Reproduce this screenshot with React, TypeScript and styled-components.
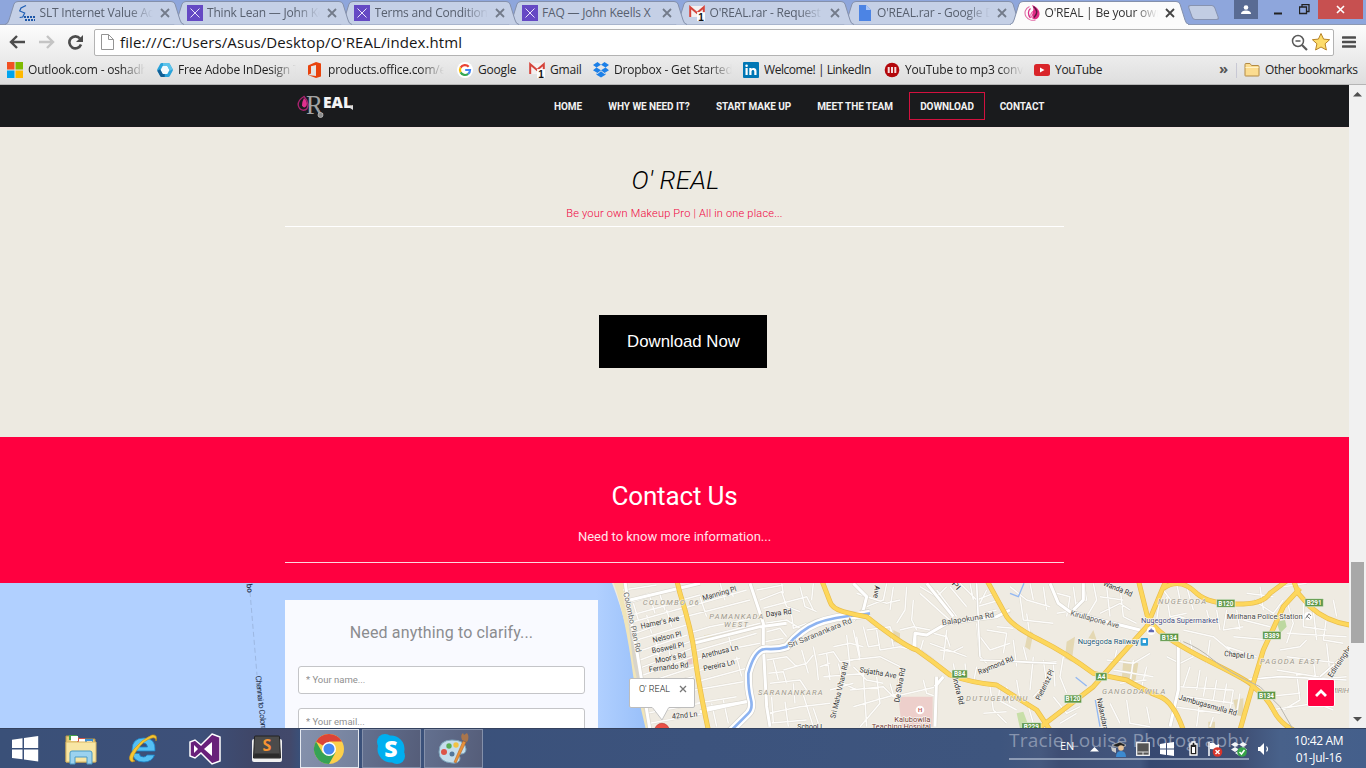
import React from "react";
import styled, { createGlobalStyle } from "styled-components";

const ui = `"Open Sans", "Noto Sans", sans-serif`;
const web = `Roboto, "Liberation Sans", sans-serif`;

const Global = createGlobalStyle`
  * { box-sizing: border-box; }
  body { margin: 0; overflow: hidden; }
`;

const Screen = styled.div`
  width: 1366px;
  height: 768px;
  display: flex;
  flex-direction: column;
  overflow: hidden;
  font-family: ${ui};
`;

/* ---------- browser chrome ---------- */
const TabStrip = styled.div`
  height: 25px;
  flex: none;
  display: flex;
  padding-left: 5px;
  background: #8ea6dc;
  border-bottom: 1px solid #8b98b3;
`;
const TabItem = styled.div<{ $active?: boolean; $z: number }>`
  position: relative;
  z-index: ${(p) => p.$z};
  flex: none;
  width: ${(p) => (p.$active ? 177 : 167.5)}px;
  height: 25px;
  display: flex;
  align-items: center;
  padding-left: 14px;
  color: ${(p) => (p.$active ? "#333" : "#58606f")};
`;
const TabShape = styled.svg`
  position: absolute;
  left: 0;
  top: 0;
  z-index: -1;
`;
const Fade = styled.span<{ $w: number; $fade?: boolean; $ls?: number }>`
  display: block;
  width: ${(p) => p.$w}px;
  overflow: hidden;
  white-space: nowrap;
  font-size: 12px;
  line-height: 18px;
  letter-spacing: ${(p) => p.$ls ?? -0.2}px;
  ${(p) => p.$fade && "mask-image: linear-gradient(to right, #000 calc(100% - 24px), transparent);"}
`;
const TabTitle = styled(Fade)`
  margin: 1px 0 0 4.5px;
`;
const TabClose = styled.svg`
  margin: 1px 0 0 7px;
  flex: none;
`;
const NewTab = styled.div`
  width: 27px;
  height: 15px;
  margin: 5px 0 0 3px;
  background: #c2cde3;
  border: 1px solid #8793b0;
  border-radius: 3px;
  transform: skewX(20deg);
`;
const WindowButtons = styled.div`
  display: flex;
  margin: 0 3px 0 auto;
  height: 19px;
`;
const WinButton = styled.div<{ $w: number; $bg?: string }>`
  width: ${(p) => p.$w}px;
  height: 19px;
  background: ${(p) => p.$bg ?? "transparent"};
  display: flex;
  align-items: center;
  justify-content: center;
`;
const WinSpacer = styled.div`
  width: 4px;
`;
const Toolbar = styled.div`
  height: 32px;
  flex: none;
  display: flex;
  align-items: center;
  padding: 2px 9px 0 9px;
  background: linear-gradient(#fcfcfc, #ececec);
`;
const NavIcons = styled.div`
  display: flex;
  width: 85px;
`;
const Omnibox = styled.div`
  width: 1240px;
  height: 27px;
  border: 1px solid #b3b3b3;
  border-radius: 2px;
  background: #fff;
  display: flex;
  align-items: center;
  padding: 0 2px 0 6px;
`;
const Url = styled.span`
  flex: 1;
  margin: -1px 0 0 6px;
  font-size: 15px;
  line-height: 22px;
  letter-spacing: 0.1px;
  color: #161616;
`;
const StarIcon = styled.svg`
  margin-left: 2px;
`;
const MenuIcon = styled.svg`
  margin-left: 8px;
`;
const Bookmarks = styled.div`
  height: 28px;
  flex: none;
  display: flex;
  align-items: center;
  padding: 0 0 1px 7px;
  background: linear-gradient(#ececec, #dedede);
  border-bottom: 1px solid #b5b5b5;
  color: #222;
`;
const Bookmark = styled.div<{ $w: number }>`
  display: flex;
  align-items: center;
  gap: 5px;
  flex: none;
  width: ${(p) => p.$w}px;
`;
const BookmarkText = styled(Fade)`
  margin-top: -1px;
`;
const More = styled.span`
  width: 17px;
  margin: -4px 0 0 1px;
  font-size: 15px;
  font-weight: 700;
  line-height: 16px;
  color: #555;
`;
const Divider = styled.i`
  width: 1px;
  height: 15px;
  background: #c8c8d4;
  margin-right: 7px;
`;

/* ---------- web page ---------- */
const Viewport = styled.div`
  height: 643px;
  flex: none;
  display: flex;
`;
const Page = styled.main`
  width: 1349px;
  display: flex;
  flex-direction: column;
  font-family: ${web};
  position: relative;
`;
const SiteNav = styled.nav`
  height: 42px;
  flex: none;
  background: #1a1b1d;
  display: flex;
  align-items: center;
  padding-left: 297px;
`;
const LogoBox = styled.div`
  width: 247px;
  height: 28px;
`;
const NavLink = styled.a<{ $w: number; $active?: boolean }>`
  width: ${(p) => p.$w}px;
  height: 28px;
  flex: none;
  border: 1px solid ${(p) => (p.$active ? "#d3113f" : "transparent")};
  display: flex;
  align-items: center;
  justify-content: center;
  margin-right: 6px;
  font-size: 10px;
  font-weight: 700;
  letter-spacing: -0.08px;
  color: #f2f2f2;
  white-space: nowrap;
`;
const Hero = styled.section`
  height: 310px;
  flex: none;
  background: #edeae1;
  border-top: 1px solid #f3e6e2;
  display: flex;
  flex-direction: column;
  align-items: center;
`;
const SectionHead = styled.header<{ $top: number; $h: number; $line: string }>`
  width: 779px;
  height: ${(p) => p.$h}px;
  flex: none;
  padding-top: ${(p) => p.$top}px;
  border-bottom: 1px solid ${(p) => p.$line};
  display: flex;
  flex-direction: column;
  align-items: center;
`;
const HeroTitle = styled.h1`
  margin: 0 0 0 2px;
  font-size: 26px;
  font-weight: 300;
  font-style: italic;
  line-height: 32px;
  letter-spacing: 0.1px;
  color: #000;
`;
const HeroSub = styled.p`
  margin: 10px 0 0;
  font-size: 11px;
  font-weight: 300;
  line-height: 16px;
  letter-spacing: 0.2px;
  color: #f0003c;
`;
const DownloadButton = styled.button`
  margin: 88px 0 0 17px;
  width: 168px;
  height: 53px;
  padding: 0 0 0 1px;
  border: 0;
  background: #000;
  color: #fff;
  font: 16.8px "Liberation Sans", Arial, sans-serif;
`;
const Contact = styled.section`
  height: 146px;
  flex: none;
  background: #ff0040;
  display: flex;
  flex-direction: column;
  align-items: center;
`;
const ContactTitle = styled.h2`
  margin: 0;
  font-size: 26px;
  font-weight: 400;
  line-height: 32px;
  letter-spacing: -0.15px;
  color: #fff;
`;
const ContactSub = styled.p`
  margin: 16px 0 0;
  font-size: 13px;
  line-height: 18px;
  color: #ffe3ea;
`;
const MapArea = styled.section`
  height: 145px;
  flex: none;
  position: relative;
  overflow: hidden;
  padding: 17px 0 0 285px;
`;
const MapSvg = styled.svg`
  position: absolute;
  left: 0;
  top: 0;
`;
const FormCard = styled.form`
  position: relative;
  width: 313px;
  height: 300px;
  background: #f9faff;
  padding: 22px 13px 0;
  display: flex;
  flex-direction: column;
`;
const FormTitle = styled.h3`
  margin: 0 0 22px;
  font-size: 16px;
  font-weight: 400;
  line-height: 22px;
  letter-spacing: 0.14px;
  text-align: center;
  color: #8b8c8f;
`;
const Field = styled.input`
  height: 28px;
  flex: none;
  margin-bottom: 14px;
  border: 1px solid #c4c5c8;
  border-radius: 3px;
  background: #fff;
  padding: 0 7px 2px;
  font: 9.5px ${web};
  &::placeholder { color: #8f8f8f; opacity: 1; }
`;
const InfoWindow = styled.div`
  position: absolute;
  left: 629px;
  top: 95px;
  width: 66px;
  height: 30px;
  border: 1px solid #bdbdbd;
  border-radius: 2px;
  background: #fff;
  display: flex;
  justify-content: space-between;
  padding: 3px 7px 0 9px;
  font-size: 9px;
  line-height: 15px;
  font-weight: 300;
  color: #222;
`;
const InfoPointer = styled.svg`
  position: absolute;
  left: 21px;
  top: 27px;
`;
const ToTop = styled.button`
  position: absolute;
  right: 14px;
  bottom: 21px;
  width: 28px;
  height: 28px;
  padding: 0;
  border: 1px solid #fff;
  border-radius: 2px;
  background: #ff0040;
  display: flex;
  align-items: center;
  justify-content: center;
`;
const Scrollbar = styled.div`
  width: 17px;
  background: #f1f1f1;
  display: flex;
  flex-direction: column;
  align-items: center;
`;
const ScrollArrow = styled.svg`
  margin-top: 4px;
  flex: none;
`;
const Thumb = styled.div`
  width: 13px;
  height: 81px;
  margin: 462px 0 67px;
  background: #a8a8a8;
`;

/* ---------- taskbar ---------- */
const Taskbar = styled.footer`
  height: 40px;
  flex: none;
  display: flex;
  position: relative;
  border-top: 1px solid #34425f;
  background: linear-gradient(90deg, #3a5078 0, #3d5079 200px, #3f4769 250px, #42496b 290px, #3a5079 300px, #3c537d 700px, #3e557e 1000px, #46597f 1040px, #3e4e74 1060px, #43577f 1140px, #364870 1150px, #3f4f74 1240px, #48618a 1280px, #445f8b 1366px);
`;
const TaskCell = styled.div<{ $w: number }>`
  width: ${(p) => p.$w}px;
  height: 39px;
  display: flex;
  align-items: center;
  justify-content: center;
`;
const TaskFrame = styled.div<{ $kind?: "active" | "open" }>`
  width: 59px;
  height: 39px;
  display: flex;
  align-items: center;
  justify-content: center;
  border: 1px solid ${(p) => (p.$kind === "active" ? "#e4e8ef" : p.$kind === "open" ? "#8490aa" : "transparent")};
  background: ${(p) => (p.$kind === "active" ? "linear-gradient(100deg, #8591ac, #74819d)" : p.$kind === "open" ? "linear-gradient(100deg, #63708f, #555d79)" : "transparent")};
`;
const Watermark = styled.span`
  position: absolute;
  left: 1009px;
  top: -1px;
  width: 240px;
  height: 32px;
  border-bottom: 2px solid #8d9bb5;
  font-size: 19px;
  line-height: 24px;
  letter-spacing: 0.2px;
  color: #8794ae;
  white-space: nowrap;
`;
const Tray = styled.div`
  position: relative;
  margin-left: auto;
  width: 308px;
  display: flex;
  align-items: center;
  color: #fff;
  font-size: 12px;
`;
const Lang = styled.span`
  width: 31px;
  margin-top: -6px;
  font-size: 11px;
  padding-left: 2px;
`;
const TrayIcon = styled.svg<{ $ml: number }>`
  flex: none;
  margin-left: ${(p) => p.$ml}px;
`;
const Clock = styled.div`
  margin-left: auto;
  width: 97px;
  text-align: center;
  line-height: 17px;
  letter-spacing: -0.35px;
`;

/* ---------- small icons ---------- */
const XFav = () => (
  <svg width="16" height="16"><rect width="16" height="16" fill="#6549c4" /><path d="M3.5 3.5l9 9M12.500 3.500l-9 9" stroke="#e9e4fa" strokeWidth="1" /></svg>
);
const GmailFav = () => (
  <svg width="16" height="16">
    <rect x="0.500" y="1" width="15" height="11" fill="#f4f1f1" />
    <path d="M1.200 12V2.200L8 8l6.800-5.800V8" fill="none" stroke="#d5443b" strokeWidth="2" />
    <rect x="8" y="7" width="8" height="9" fill="#fff" opacity=".85" />
    <text x="9.200" y="15.500" fontSize="10" fontFamily="Liberation Sans" fontWeight="700" fill="#111">1</text>
  </svg>
);
const SltFav = () => (
  <svg width="16" height="16"><path d="M7 .5L2 3l-1.300 3 5 2-2 4-3 .5" fill="none" stroke="#1f5fb5" strokeWidth="1.200" /><path d="M5 12h11M6 15h10" stroke="#1d57a8" strokeWidth="2" strokeDasharray="2 1" /></svg>
);
const DocFav = () => (
  <svg width="16" height="16"><path d="M2 0h7l5 5v11H2z" fill="#4c84e4" /><path d="M9 0v5h5z" fill="#a9c5f7" /></svg>
);
const OrealFav = () => (
  <svg width="16" height="16">
    <path d="M5.500 1.500C1 3.500 0 8 2 11.500 4 14.500 8 16 11.500 15" fill="none" stroke="#e06aa5" strokeWidth="1.100" />
    <path d="M6.500 3.500C4 5.500 3.500 9.500 6.500 13" fill="none" stroke="#d92e87" strokeWidth="1.300" />
    <path d="M8 0c5 2 8 5.500 7.500 9.500C15 13.500 11.500 15.500 8.500 13.500 5.500 11 6 8 9 6 10 4 9 2 8 0z" fill="#df2b85" />
    <path d="M9.500 1.500C14 5 13.500 9 10 12.500" stroke="#5d1742" strokeWidth="1.400" fill="none" />
    <path d="M8.500 7.500q-2 2.500 0 5" stroke="#fbd6e8" fill="none" />
  </svg>
);

const tabs = [
  { icon: <SltFav />, text: "SLT Internet Value Ad", fade: true },
  { icon: <XFav />, text: "Think Lean — John Ke", fade: true },
  { icon: <XFav />, text: "Terms and Conditions", fade: true },
  { icon: <XFav />, text: "FAQ — John Keells X", fade: false },
  { icon: <GmailFav />, text: "O'REAL.rar - Request", fade: true },
  { icon: <DocFav />, text: "O'REAL.rar - Google D", fade: true },
  { icon: <OrealFav />, text: "O'REAL | Be your own", fade: true },
];

const MsFav = () => (
  <svg width="16" height="16"><path fill="#f25022" d="M0 0h7.500v7.500H0z" /><path fill="#7fba00" d="M8.500 0H16v7.500H8.500z" /><path fill="#00a4ef" d="M0 8.500h7.500V16H0z" /><path fill="#ffb900" d="M8.500 8.500H16V16H8.500z" /></svg>
);
const HexFav = () => (
  <svg width="16" height="16">
    <path d="M4.700 2.500h6.600L14.300 8l-3 5.500H4.700L1.700 8z" fill="#f4fafd" stroke="#2aa3da" strokeWidth="3.200" strokeLinejoin="round" />
    <path d="M1.700 8l3 5.500h3" fill="none" stroke="#125f95" strokeWidth="3.200" strokeLinejoin="round" />
    <path d="M6 2.500h5.300L14.300 8" fill="none" stroke="#5cc3ea" strokeWidth="3.200" strokeLinejoin="round" />
  </svg>
);
const OfficeFav = () => (
  <svg width="16" height="16"><path d="M1 3.500L9 0l5 1.500v13L9 16l-8-3 8 1V3L4 4.200V11.500L1 13z" fill="#e8430d" /></svg>
);
const GoogleFav = () => (
  <svg width="16" height="16"><circle cx="8" cy="8" r="8" fill="#fff" /><g fill="none" strokeWidth="2.200"><path d="M11.700 4.800A5 5 0 0 0 3.600 5.600" stroke="#ea4335" /><path d="M3.600 5.600a5 5 0 0 0 0 4.800" stroke="#fbbc05" /><path d="M3.600 10.400a5 5 0 0 0 7.600 1.400" stroke="#34a853" /><path d="M11.200 11.800A5 5 0 0 0 13 8H8.200" stroke="#4285f4" /></g></svg>
);
const DropboxFav = () => (
  <svg width="16" height="16" fill="#1c80e8"><path d="M4.500 0L8 2.700 3.500 5.500 0 2.900zM11.500 0L16 2.900 12.500 5.500 8 2.700zM3.500 5.500L8 8.300 4.500 11 0 8.200zM12.500 5.500L16 8.200 11.500 11 8 8.300z" /><path d="M3.500 11.300l1 .7L8 9.300l3.500 2.700 1-.7v1.500L8 15.600l-4.500-2.800z" /></svg>
);
const LinkedFav = () => (
  <svg width="16" height="16"><rect width="16" height="16" rx="1" fill="#0077b5" /><path d="M2.500 6h2.200v7H2.500zM6.300 6h2.200v1c1-1.600 5-1.700 5 2v4h-2.200V9.500c0-2.300-2.800-2-2.800 0V13H6.300z" fill="#fff" /><circle cx="3.600" cy="3.800" r="1.300" fill="#fff" /></svg>
);
const Mp3Fav = () => (
  <svg width="16" height="16"><circle cx="8" cy="8" r="7.300" fill="#b3070b" /><path d="M4.700 5v6M8 5v6M11.300 5v6" stroke="#f5dede" strokeWidth="2" /></svg>
);
const YtFav = () => (
  <svg width="16" height="16"><rect y="2" width="16" height="12" rx="2.500" fill="#d9252a" /><path d="M6 5.500v5L10.500 8z" fill="#fff" /></svg>
);
const FolderFav = () => (
  <svg width="16" height="16"><path d="M1 13.500v-11Q1 1.500 2 1.500h4l1.500 2H14q1 0 1 1v9q0 .5-.5.5h-13q-.5 0-.5-.5z" fill="#fbdc90" stroke="#b28a45" /><path d="M1.500 5.500h13" stroke="#fff2c8" /></svg>
);

const bookmarks = [
  { icon: <MsFav />, text: "Outlook.com - oshadh", w: 150, t: 117, fade: true },
  { icon: <HexFav />, text: "Free Adobe InDesign T", w: 150, t: 118, fade: true },
  { icon: <OfficeFav />, text: "products.office.com/en", w: 150, t: 116, fade: true },
  { icon: <GoogleFav />, text: "Google", w: 72, t: 42 },
  { icon: <GmailFav />, text: "Gmail", w: 64, t: 34 },
  { icon: <DropboxFav />, text: "Dropbox - Get Started", w: 150, t: 118, fade: true },
  { icon: <LinkedFav />, text: "Welcome! | LinkedIn", w: 141, t: 112, ls: -0.45 },
  { icon: <Mp3Fav />, text: "YouTube to mp3 conv", w: 150, t: 118, fade: true },
  { icon: <YtFav />, text: "YouTube", w: 184, t: 60, ls: -0.3 },
];

const navItems = [
  { text: "HOME", w: 48 },
  { text: "WHY WE NEED IT?", w: 102 },
  { text: "START MAKE UP", w: 95 },
  { text: "MEET THE TEAM", w: 96 },
  { text: "DOWNLOAD", w: 76 },
  { text: "CONTACT", w: 62 },
];

/* ---------- map data: a 3x grid whose origin is the coast corner ---------- */
const minorRoads =
  "M70 30L170 15M80 70L235 25M90 60L150 40M95 105L240 65M100 125L245 85M105 160L255 105M110 180L260 135M112 215L262 165M120 240L270 185M125 262L275 205M130 285L280 230M135 310L285 260M285 275L420 235M290 305L440 265M285 330L430 305M290 370L410 350M140 400L300 370M150 430L315 400" +
  "M245 60L300 45M250 85L440 30M255 110L450 60M265 160L330 140L480 110M280 215L470 160M285 240L400 205L480 190M275 180L480 130M360 10L375 60M390 20L400 50M410 230L425 290M385 165L398 215M300 50L320 110M335 370L350 440M370 360L385 430M100 70L115 120M150 50L165 100M180 45L195 90M140 105L155 160M200 90L215 140M165 165L175 230M205 200L215 260M130 330L280 290M300 290L308 360" +
  "M470 30L550 15M480 60L545 35L560 80M490 85L620 50L640 90M495 130L560 120L600 145M500 155L540 145L560 170M495 185L550 175M545 10L550 40M600 20L615 80L650 95M640 10L635 60M560 80L600 95M575 105L580 145L620 130" +
  "M500 240L560 230L590 260M505 280L550 275L560 310M510 310L600 300L620 330M520 240L535 300M550 270L620 250L640 225M580 310L585 370M605 210L625 280M640 200L650 250L655 300M505 400L600 380L690 370M515 350L520 430M555 365L565 440M610 345L640 440M505 430L620 420M640 385L655 430" +
  "M655 225L700 215L720 245L760 240M660 260L690 250M680 220L690 300M715 250L730 310L770 330M700 200L750 190L790 200M740 165L750 260M760 150L780 240M790 140L805 200L840 195M670 290L800 280M690 330L760 310M760 260L800 300L850 310" +
  "M770 40L860 70L900 60M860 10L850 60L800 80M880 20L870 90M920 20L915 90L890 130M940 60L935 120L950 150M960 40L1060 130M960 20L1010 50L1040 20M1010 30L1070 110M1050 20L1100 80M1080 10L1130 60L1180 40M1110 10L1120 60M1140 70L1160 30M1130 80L1200 60M1150 100L1190 90M900 150L940 140L990 150" +
  "M800 150L870 140L880 170M830 150L840 210L900 200M870 150L880 200M750 240L840 230L900 260M770 170L780 230M900 200L960 215L970 180M960 210L1000 240M990 190L1100 230M1000 160L1040 170L1050 200M1020 210L1060 215L1090 200M1040 150L1030 240M1130 130L1140 230L1160 250M1160 150L1220 160L1210 220M1190 140L1240 145M1140 170L1170 210L1230 190" +
  "M750 330L850 320L880 350L1010 320M760 380L900 340M790 280L800 440M830 290L840 370L780 440M870 310L880 345M900 280L890 340M970 300L980 340L1010 350M1060 250L1070 310M1095 250L1100 300M1130 260L1120 310M1230 240L1300 250L1370 245M1240 180L1250 260M1270 200L1280 240M1300 230L1290 330M1330 240L1340 310L1300 350M1360 250L1365 320M1390 230L1380 290L1400 340M1170 320L1180 390L1220 430M1200 310L1195 360L1250 390M1220 320L1230 370M1250 300L1260 360M1280 360L1300 430M1150 400L1220 395M1360 350L1400 400L1440 380M1380 430L1430 400" +
  "M1230 20L1280 60L1350 80M1290 10L1300 60M1330 20L1340 90M1260 50L1270 120L1360 130M1280 100L1290 170M1370 40L1410 50L1400 110M1420 20L1430 90L1370 100M1450 10L1460 60L1430 70M1480 10L1490 60L1460 110M1500 100L1560 70L1590 90M1500 50L1570 60M1520 20L1530 110M1560 20L1570 110L1610 130" +
  "M1690 30L1720 70L1800 60M1700 50L1710 110L1760 100M1730 10L1740 60M1660 130L1740 110L1800 130M1680 50L1670 120M1760 20L1780 90M1820 90L1830 130M1850 90L1860 150M1880 90L1870 150L1930 140M1910 90L1920 150M1940 40L2020 50M1960 60L2020 100L2050 60M1980 20L1990 90M1930 120L2010 140M1900 170L2010 180M1750 150L1840 170L1900 220M1770 180L1780 230M1830 180L1820 250M1880 200L1970 230" +
  "M2050 20L2120 10M2060 60L2080 130L2060 190M2110 60L2110 140L2180 150M2140 90L2150 180M2180 110L2170 180L2230 190M2200 60L2210 110M2060 160L2240 170M2040 210L2100 200L2120 180M2030 270L2180 295L2240 290M2060 230L2220 250M2180 190L2190 280M2140 240L2150 320M2090 280L2100 360L2050 390M2000 350L2100 340M2010 390L2150 370L2200 390" +
  "M1520 240L1600 250L1650 220M1540 270L1660 290M1560 310L1640 300M1550 210L1540 260M1600 240L1590 310M1640 260L1620 340M1700 230L1740 250L1780 230M1770 260L1750 320M1800 270L1790 330M1820 290L1810 350M1850 300L1840 360M1880 310L1870 370M1900 330L1890 390M1920 340L1910 400M1740 320L1900 330M1530 370L1560 430M1580 360L1590 430L1650 440M1640 380L1650 430M1720 380L1860 400M1760 350L1900 370M1800 360L1790 440M1840 410L1830 440";

const mediumRoads =
  "M75 5C90 110 105 180 115 240L150 450M90 60L300 10M280 190L480 140L560 130M450 10L490 130L490 200L500 380L510 440M320 385L460 362M300 395L450 362M760 10L800 50L790 90L760 120M980 10L1060 110M945 210L945 160L980 165L1040 130L1190 110L1230 90M945 165L940 210M1350 10L1375 70L1410 95L1500 120L1620 150M1450 10L1450 60L1420 90M1735 180L1735 330L1710 440M1010 290L1005 440M1005 320L1030 290";

const lanes = "M1130 10L1140 230M1140 240L1370 250M1920 300L2040 290L2240 300M2160 290L2240 220";

const canal = "M390 455L445 400Q460 385 452 355T445 280Q465 205 500 207T560 200Q600 150 650 130T780 105L810 100";

const majorRoads = [
  "M230 0L240 40Q275 150 285 230T325 450",
  "M665 0L690 65Q695 85 730 95T800 110Q830 135 880 170T950 210Q1000 245 1050 285Q1120 310 1190 315L1310 390L1350 450",
  "M1160 0L1220 110Q1240 140 1320 180T1480 280L1580 300Q1640 335 1680 350T1750 450",
  "M1540 440L1330 440",
  "M1310 450L1480 320L1550 240L1640 140L1690 20L1700 0",
  "M1615 0L1645 120L1680 155Q1720 190 1840 250T1960 320Q2000 350 2020 390T2080 450",
  "M1690 25Q1740 -10 1790 40Q1830 75 1930 72Q1990 70 2010 40L2070 -5",
  "M2080 0L2095 40L2130 80Q2180 125 2250 135",
  "M2100 25L2050 80L1990 210L1960 310L1920 450",
].filter((_, i) => i !== 3);

const roadLabels: [string, number, number, number, number, string?][] = [
  ["Manning Pl", 310, 62, -16, 105],
  ["Daya Rd", 498, 110, -6, 78],
  ["Hamer's Ave", 124, 146, -12, 118],
  ["Nelson Pl", 160, 188, -13, 88],
  ["Boswell Pl", 157, 220, -11, 98],
  ["Moor's Rd", 167, 250, -11, 94],
  ["Fernando Rd", 148, 276, -7, 119],
  ["Arethusa Ln", 306, 236, -14, 114],
  ["Pereira Ln", 312, 274, -13, 96],
  ["42nd Ln", 217, 417, -6, 76],
  ["Colombo Plan Rd", 70, 38, 78, 184, "#666"],
  ["Sri Saranankara Rd", 568, 204, -22, 204, "#555"],
  ["Sri Maha Vihara Rd", 706, 416, -77, 172],
  ["Balapokuna Rd", 1027, 136, -9, 158, "#555"],
  ["Raymond Rd", 1138, 284, -22, 112],
  ["Sujatha Ave", 778, 276, 10, 112],
  ["De Silva Rd", 898, 368, -80, 104],
  ["Indra Rd", 1058, 296, 76, 82],
  ["Pieterisz Pl", 1320, 362, -64, 98],
  ["Kirullapone Ave", 1410, 106, 15, 150, "#555"],
  ["Wanda Rd", 1508, 16, 22, 92],
  ["Nalandarama", 1490, 356, 78, 130],
  ["Ave", 824, 16, 96, 38],
  ["Pl", 1054, 12, 48, 26],
  ["Chapel Ln", 1872, 228, 6, 90],
  ["Jambugasmulla Rd", 1735, 358, 16, 180],
  ["Edirisinghe", 2195, 294, -56, 110],
  ["School L", 592, 448, 0, 80],
];

const areaLabels: [string, number, number, number][] = [
  ["COLOMBO 06", 128, 74, 168],
  ["PAMANKADA", 328, 118, 162],
  ["WEST", 372, 142, 72],
  ["SARANANKARA", 474, 345, 194],
  ["DUTUGEMUNU", 1098, 362, 184],
  ["NUGEGODA", 1674, 71, 144],
  ["PAGODA EAST", 1980, 251, 180],
  ["GANGODAWILA", 1506, 342, 190],
  ["MIRIHANA", 2190, 340, 100],
];

const shields: [string, number, number, number][] = [
  ["B84", 1056, 270, 46],
  ["B120", 1393, 345, 52],
  ["A4", 1487, 278, 34],
  ["B229", 1265, 428, 58],
  ["B134", 1680, 160, 56],
  ["B120", 1850, 58, 55],
  ["B291", 2115, 56, 55],
  ["B389", 1988, 154, 55],
  ["B134", 1972, 334, 55],
];

const MapDrawing = () => (
  <MapSvg width="1349" height="145" viewBox="0 583 1349 145" fontFamily={web}>
    <defs>
      <linearGradient id="sea" x1="0" x2="1"><stop offset=".92" stopColor="#b1d0ff" /><stop offset="1" stopColor="#98bff9" /></linearGradient>
    </defs>
    <rect y="583" width="1349" height="145" fill="#efebe2" />
    <path d="M0 583H612Q630 630 633 670L648 728H0z" fill="url(#sea)" />
    <path d="M250 592L257 675" stroke="#9db8e2" strokeDasharray="5 3" />
    <text transform="translate(246.500 584) rotate(84)" fontSize="8" fill="#26324d" fontWeight="500">bo</text>
    <text transform="translate(255.500 676) rotate(84)" fontSize="8" fill="#26324d" textLength="63">Chennai to Colombo</text>
    <g transform="translate(600 580) scale(.33333)">
      <path d="M38 0L75 0L115 230L152 450L138 450L100 290Q75 100 38 0z" fill="#f1e5b9" />
      <path d="M70 0L115 230L152 450L145 450L100 250z" fill="#d9d5cb" />
      <path d="M895 350H998V440H905z" fill="#edcfcb" />
      <path d="M1250 400l20-5 15 40-25 10z" fill="#c8dfa8" />
      <path d="M1400 185l25-15-10 75-20-10zM1480 150l10 30-25-5zM1285 150l15 10-10 50-15-10zM880 150l20 10v30l-20-5zM1570 240l45 10-10 60-40-10zM1900 360l30-5v55l-20-5zM1825 425h20v20h-20z" fill="#e4d8b3" />
      <path d="M2030 125l25-5 5 20-20 20z" fill="#bdd8a0" />
      <path d="M262 230l14-3 2 25-14 2z" fill="#e9c9c6" />
      <path d="M312 166l25-4 3 12-25 4z" fill="#e9dcae" />
      <path d={minorRoads} fill="none" stroke="#dedad1" strokeWidth="7" strokeLinejoin="round" />
      <path d={minorRoads} fill="none" stroke="#fdfcfa" strokeWidth="4.500" strokeLinejoin="round" />
      <path d={mediumRoads} fill="none" stroke="#dad6cd" strokeWidth="13" strokeLinejoin="round" />
      <path d={lanes} fill="none" stroke="#dad6cd" strokeWidth="8" strokeLinejoin="round" />
      <path d={lanes} fill="none" stroke="#fff" strokeWidth="5" strokeLinejoin="round" />
      <path d={mediumRoads} fill="none" stroke="#fff" strokeWidth="9" strokeLinejoin="round" />
      <path d={canal} fill="none" stroke="#d5d2ca" strokeWidth="26" />
      <path d={canal} fill="none" stroke="#fff" strokeWidth="22" />
      <path d={canal} fill="none" stroke="#8db3f0" strokeWidth="8" />
      <path d="M1230 40L1255 50L1272 10M1427 292L1460 318M1486 360L1500 440" fill="none" stroke="#93b8f2" strokeWidth="4" />
      {majorRoads.map((d) => (
        <path key={d} d={d} fill="none" stroke="#e9bd4c" strokeWidth="15" strokeLinejoin="round" />
      ))}
      {majorRoads.map((d) => (
        <path key={d} d={d} fill="none" stroke="#fdd75c" strokeWidth="11" strokeLinejoin="round" />
      ))}
      <path d="M1750 185Q1800 205 1840 240T1980 320L2040 380L2080 450" fill="none" stroke="#b9b6ae" strokeWidth="3" />
      {areaLabels.map(([t, x, y, w]) => (
        <text key={t} x={x} y={y} textLength={w} fontSize="23" fontStyle="italic" fontWeight="400" fill="#9c978a" stroke="#f5f2ea" strokeWidth="3" paintOrder="stroke">{t}</text>
      ))}
      {roadLabels.map(([t, x, y, a, w, c]) => (
        <text key={t} transform={`translate(${x} ${y}) rotate(${a})`} textLength={w} lengthAdjust="spacingAndGlyphs" fontSize="23" fill={c ?? "#333"} stroke="#f8f6f0" strokeWidth="4" paintOrder="stroke">{t}</text>
      ))}
      {shields.map(([t, x, y, w]) => (
        <g key={`${t}-${x}`}>
          <rect x={x} y={y} width={w} height="24" rx="2" fill="#5d9747" stroke="#e8f0e0" strokeWidth="2" />
          <text x={x + w / 2} y={y + 19} textAnchor="middle" fontSize="19" fontWeight="700" fill="#fff">{t}</text>
        </g>
      ))}
      <g fontSize="23" stroke="#f8f6f0" strokeWidth="4" paintOrder="stroke">
        <text x="1433" y="191" textLength="184" fill="#1d5878">Nugegoda Railway</text>
        <text x="1623" y="130" textLength="232" fill="#4a4f86">Nugegoda Supermarket</text>
        <text x="1880" y="116" textLength="228" fill="#4b4b4b">Mirihana Police Station</text>
        <text x="883" y="425" textLength="108" fill="#7a3f3b">Kalubowila</text>
        <text x="815" y="446" textLength="178" fill="#7a3f3b">Teaching Hospital</text>
      </g>
      <rect x="1622" y="174" width="22" height="23" rx="3" fill="#2a9bd5" />
      <rect x="1628" y="179" width="10" height="10" fill="#fff" />
      <circle cx="1654" cy="152" r="13" fill="#fff" /><path d="M1647 150h14l2 7h-18zM1650 149q4-7 8 0" fill="#5e68b5" />
      <circle cx="2125" cy="108" r="12" fill="#fff" /><path d="M2117 115l10-14 6 7M2120 108l10 8" stroke="#777" strokeWidth="3" fill="none" />
      <circle cx="960" cy="390" r="13" fill="#fff" /><text x="954" y="397" fontSize="18" fontWeight="700" fill="#c0605a">H</text>
      <circle cx="186" cy="452" r="22" fill="#ea4f45" stroke="#b83a33" strokeWidth="2" />
    </g>
  </MapSvg>
);

const Logo = () => (
  <svg width="58" height="28" viewBox="0 0 58 28">
    <path d="M7 4.500Q1 8 1.200 13 2 18 6.500 18.200 11 18 11 12.500 10.500 8 7 4.500z" fill="none" stroke="#a8246f" strokeWidth="1.400" />
    <path d="M7 6q4 4 2.500 8Q7 17 5 13.500 5 9.500 7 6z" fill="#e0308e" />
    <text x="9" y="22" fontFamily="Liberation Serif" fontSize="28" fill="#a4a4a4" textLength="17" lengthAdjust="spacingAndGlyphs">R</text>
    <path d="M21 16q1 4 3 6" stroke="#8f8f8f" fill="none" />
    <circle cx="23.500" cy="23" r="2.500" fill="#8b8b8b" stroke="#bbb" strokeWidth=".8" />
    <text x="26" y="16" fontFamily="Open Sans" fontWeight="800" fontSize="16.500" fill="#f4f4f4" textLength="29" lengthAdjust="spacingAndGlyphs">EAL</text>
    <path d="M53 14l3-1v5l-3-2z" fill="#ddd" />
  </svg>
);

/* ---------- taskbar icons ---------- */
const StartIcon = () => (
  <svg width="28" height="28" fill="#fff"><path d="M1 4.700L11.500 3.300V13H1zM13 3l14.200-2v12H13zM1 14.500h10.500v9.700L1 22.900zM13 14.500h14.200V26.500L13 24.400z" /></svg>
);
const ExplorerIcon = () => (
  <svg width="34" height="32">
    <path d="M2 3h11l2 3h16v23H2z" fill="#e9cd7b" stroke="#b99746" />
    <path d="M5 2h8v5H5z" fill="#46a04e" /><path d="M13 5h8v4h-8z" fill="#d35247" /><path d="M21 6h8v4h-8z" fill="#3e8ed3" /><path d="M7 3h7v5H7zM15 6h6v4h-6zM23 8h5v3h-5z" fill="#fff" />
    <path d="M2 9h30v20H2z" fill="#f8e6a4" stroke="#d9b764" />
    <path d="M6 31V20q0-2 2-2h18q2 0 2 2v11h-5v-7H11v7z" fill="#9bd2ef" stroke="#4a99c4" />
  </svg>
);
const IeIcon = () => (
  <svg width="34" height="34">
    <path d="M8 19h21q1-13-11-13T6 18q0 12 12 12 8 0 10.500-7H21q-1 2-3.500 2-4 0-4.200-3.500H8zM13.500 15q.5-4 4-4t4 4z" fill="#55c0f3" stroke="#1b83c9" strokeWidth=".8" fillRule="evenodd" />
    <path d="M6 30q-6-3 2-13T26 3q6-1 4 6 0-4-4-3Q18 8 11 18 4 28 9 29z" fill="#f7c632" stroke="#cb9512" strokeWidth=".6" />
  </svg>
);
const VsIcon = () => (
  <svg width="34" height="32"><path d="M24 1l8 3v24l-8 3L13 20l-6 5-5-2V9l5-2 6 5z" fill="#68217a" stroke="#fff" strokeWidth="1.500" /><path d="M24 9v14l-8-7zM6 12l4 4-4 4z" fill="#fff" /></svg>
);
const SublimeIcon = () => (
  <svg width="34" height="32"><rect x="2" y="6" width="30" height="23" rx="2" fill="#f1f1f1" /><path d="M5.500 3h23q1 0 1 1l1 21H3.500l1-21q0-1 1-1z" fill="#4b4b4b" stroke="#222" /><path d="M4.500 20.500h25l.5 4H4z" fill="#2b2b2b" /><text x="17" y="17.500" textAnchor="middle" fontFamily="Open Sans" fontWeight="700" fontSize="16" fill="#f79433">S</text></svg>
);
const ChromeIcon = () => (
  <svg width="32" height="32" viewBox="0 0 32 32"><circle cx="16" cy="16" r="15" fill="#fcd04b" /><path d="M16 16L3 8.500A15 15 0 0 1 29 8.500H16z" fill="#dc4437" /><path d="M3 8.500A15 15 0 0 0 16 31l6.500-11.500L16 16l-6.500 3.700z" fill="#36a255" /><circle cx="16" cy="16" r="7" fill="#fff" /><circle cx="16" cy="16" r="5.500" fill="#4688f1" /></svg>
);
const SkypeIcon = () => (
  <svg width="32" height="32"><circle cx="16" cy="16" r="13.500" fill="#00aff0" /><circle cx="10" cy="9" r="8" fill="#00aff0" /><circle cx="22" cy="23" r="8" fill="#00aff0" /><text x="16" y="24" textAnchor="middle" fontFamily="Open Sans" fontSize="23" fontWeight="800" fill="#fff">S</text></svg>
);
const PaintIcon = () => (
  <svg width="34" height="34"><path d="M3 20Q3 8 16 8t14 9q0 5-5 5-3 1-1 4 0 6-8 5Q3 30 3 20z" fill="#c5deec" stroke="#7da4bb" /><circle cx="8" cy="20" r="3" fill="#dc5549" /><circle cx="13" cy="14" r="2.700" fill="#57ad55" /><circle cx="20" cy="13" r="2.700" fill="#f1c343" /><circle cx="16" cy="22" r="2.500" fill="#53779a" /><path d="M27 9L18 30l2 1L30 10z" fill="#e8913a" stroke="#ad5f1c" strokeWidth=".5" /><path d="M26 8q-2-5 1-7l1 2 3-2q3 4 0 9z" fill="#a9754b" /></svg>
);

const App = () => (
  <>
    <Global />
    <Screen>
      <TabStrip>
        {tabs.map((t, i) => {
          const active = i === 6;
          return (
            <TabItem key={i} $active={active} $z={active ? 20 : 10 - i}>
              <TabShape width="180" height="25">
                <path d="M0 24.500Q3 24 4 20L9 4Q10 1.500 13 1.500H166Q169 1.500 170 4L175 20Q176 24 179 24.500" fill={active ? "#fbfbfb" : "#c5d0e6"} stroke="#8490ab" />
                {active && <path d="M1 24.500H178" stroke="#fbfbfb" />}
              </TabShape>
              {t.icon}
              <TabTitle $w={113} $fade={t.fade}>{t.text}</TabTitle>
              <TabClose width="10" height="10"><path d="M1 1l8 8M9 1L1 9" stroke={active ? "#444" : "#737b8a"} strokeWidth="1.800" /></TabClose>
            </TabItem>
          );
        })}
        <NewTab />
        <WindowButtons>
          <WinButton $w={24} $bg="#596b93"><svg width="10" height="10" fill="#fff"><circle cx="5" cy="2.500" r="2.300" /><path d="M0 9q0-3.500 5-3.500T10 9z" /></svg></WinButton>
          <WinButton $w={40}><svg width="10" height="10"><path d="M1 8.500h8" stroke="#222" strokeWidth="2" /></svg></WinButton>
          <WinButton $w={12}><svg width="11" height="11" fill="none" stroke="#222"><path d="M.5 3h7v6.500h-7zM3 2.500v-2h7v7H8" strokeWidth="1.300" /></svg></WinButton>
          <WinSpacer />
          <WinSpacer />
          <WinButton $w={45} $bg="#c75050"><svg width="9" height="9"><path d="M1 1l7 7M8 1L1 8" stroke="#fff" strokeWidth="1.600" /></svg></WinButton>
        </WindowButtons>
      </TabStrip>
      <Toolbar>
        <NavIcons>
          <svg width="75" height="16" fill="none">
            <path d="M16 8H3M8 2L2 8l6 6" stroke="#4c4c4c" strokeWidth="2.400" />
            <path d="M30 8h13M38 2l6 6-6 6" stroke="#c4c4c4" strokeWidth="2.400" />
            <path d="M71 4.500a6 6 0 1 0 1 6" stroke="#4c4c4c" strokeWidth="2.600" /><path d="M74 1v7h-7z" fill="#4c4c4c" />
          </svg>
        </NavIcons>
        <Omnibox>
          <svg width="13" height="16"><path d="M.5.5h7l5 5v10H.5zM7.500.5v5h5" fill="#fff" stroke="#949494" /></svg>
          <Url>file:///C:/Users/Asus/Desktop/O'REAL/index.html</Url>
          <svg width="17" height="17" fill="none" stroke="#5a5a5a"><circle cx="7" cy="7" r="5.500" strokeWidth="1.500" /><path d="M4.500 7h5" strokeWidth="1.500" /><path d="M11 11l5 5" strokeWidth="2.200" /></svg>
          <StarIcon width="21" height="20"><path d="M11 1.500l2.600 5.600 6 .6-4.500 4.100 1.300 6.200L11 15l-5.400 3 1.300-6.200L2.400 7.700l6-.6z" fill="#fddc6a" stroke="#b78327" /></StarIcon>
        </Omnibox>
        <MenuIcon width="14" height="14"><path d="M1 2.500h12M1 7h12M1 11.500h12" stroke="#4d4d4d" strokeWidth="2.600" strokeLinecap="round" /></MenuIcon>
      </Toolbar>
      <Bookmarks>
        {bookmarks.map((b) => (
          <Bookmark key={b.text} $w={b.w}>
            {b.icon}
            <BookmarkText $w={b.t} $fade={b.fade} $ls={b.ls}>{b.text}</BookmarkText>
          </Bookmark>
        ))}
        <More>»</More>
        <Divider />
        <Bookmark $w={120}>
          <FolderFav />
          <BookmarkText $w={98} $ls={-0.4}>Other bookmarks</BookmarkText>
        </Bookmark>
      </Bookmarks>

      <Viewport>
        <Page>
          <SiteNav>
            <LogoBox><Logo /></LogoBox>
            {navItems.map((n) => (
              <NavLink key={n.text} $w={n.w} $active={n.text === "DOWNLOAD"}>{n.text}</NavLink>
            ))}
          </SiteNav>
          <Hero>
            <SectionHead $top={36} $h={99} $line="#fff">
              <HeroTitle>O' REAL</HeroTitle>
              <HeroSub>Be your own Makeup Pro | All in one place...</HeroSub>
            </SectionHead>
            <DownloadButton>Download Now</DownloadButton>
          </Hero>
          <Contact>
            <SectionHead $top={43} $h={126} $line="#ffd5df">
              <ContactTitle>Contact Us</ContactTitle>
              <ContactSub>Need to know more information...</ContactSub>
            </SectionHead>
          </Contact>
          <MapArea>
            <MapDrawing />
            <FormCard>
              <FormTitle>Need anything to clarify...</FormTitle>
              <Field placeholder="* Your name..." />
              <Field placeholder="* Your email..." />
            </FormCard>
            <InfoWindow>
              <span>O' REAL</span>
              <svg width="8" height="14"><path d="M1 4l6 6M7 4l-6 6" stroke="#777" strokeWidth="1.300" /></svg>
              <InfoPointer width="22" height="16"><path d="M1 1L11 14 18 1" fill="#fff" stroke="#c4c4c4" /><path d="M1 0H18" stroke="#fff" strokeWidth="3" /></InfoPointer>
            </InfoWindow>
          </MapArea>
          <ToTop><svg width="14" height="10"><path d="M2 8l5-5 5 5" fill="none" stroke="#fff" strokeWidth="2.800" /></svg></ToTop>
        </Page>
        <Scrollbar>
          <ScrollArrow width="9" height="11"><path d="M0 7.500L4.500 3 9 7.500z" fill="#505050" /></ScrollArrow>
          <Thumb />
          <ScrollArrow width="9" height="11"><path d="M0 3L4.500 7.500 9 3z" fill="#505050" /></ScrollArrow>
        </Scrollbar>
      </Viewport>

      <Taskbar>
        <TaskCell $w={50}><StartIcon /></TaskCell>
        <TaskCell $w={62}><ExplorerIcon /></TaskCell>
        <TaskCell $w={62}><IeIcon /></TaskCell>
        <TaskCell $w={62}><VsIcon /></TaskCell>
        <TaskCell $w={62}><SublimeIcon /></TaskCell>
        <TaskCell $w={62}><TaskFrame $kind="active"><ChromeIcon /></TaskFrame></TaskCell>
        <TaskCell $w={62}><TaskFrame $kind="open"><SkypeIcon /></TaskFrame></TaskCell>
        <TaskCell $w={62}><TaskFrame $kind="open"><PaintIcon /></TaskFrame></TaskCell>
        <Watermark>Tracie Louise Photography</Watermark>
        <Tray>
          <Lang>EN</Lang>
          <TrayIcon $ml={2} width="9" height="6"><path d="M0 5.500L4.500 1 9 5.500z" fill="#fff" /></TrayIcon>
          <TrayIcon $ml={12} width="16" height="16"><path d="M1 4l8-3 6 3-3 2H5z" fill="#222" stroke="#ddd" strokeWidth=".6" /><circle cx="10" cy="7" r="2.800" fill="#e9c49a" /><path d="M5 16q0-6 5-6t5 6z" fill="#3c8ad0" /><path d="M0 6l5 1v5l-4-2z" fill="#ccc" /></TrayIcon>
          <TrayIcon $ml={9} width="14" height="14"><rect x=".7" y=".7" width="12.600" height="12.600" fill="#555" stroke="#fff" strokeWidth="1.200" /><path d="M1.500 10h11M7 10v3" stroke="#ddd" /></TrayIcon>
          <TrayIcon $ml={9} width="16" height="16" fill="#fff"><path d="M1 3l6-1v5.500H1zM8 2l7-1v6.500H8zM1 8.500h6V14l-6-1zM8 8.500h7V15l-7-1z" /></TrayIcon>
          <TrayIcon $ml={14} width="9" height="15"><path d="M3 1h3v2h2v11H1V3h2z" fill="#222" stroke="#fff" strokeWidth="1.300" /><path d="M3 6h3v6H3z" fill="#fff" /></TrayIcon>
          <TrayIcon $ml={9} width="17" height="16"><path d="M2 1v14" stroke="#fff" strokeWidth="1.500" /><path d="M3 2q4-1 5 1t4 0v6q-3 1-4 0T3 8z" fill="#fff" /><circle cx="10.500" cy="11" r="4.800" fill="#d8352b" /><path d="M8.500 9l4 4M12.500 9l-4 4" stroke="#fff" strokeWidth="1.400" /></TrayIcon>
          <TrayIcon $ml={7} width="16" height="16"><path d="M4 1l4 2.500L4 6 0 3.500zM12 1l4 2.500L12 6 8 3.500zM4 6l4 2.500L4 11 0 8.500zM12 6l4 2.500-4 2.500-4-2.500zM4 12l4-2.500v5z" fill="#f4f6f8" /><circle cx="11" cy="11" r="4.800" fill="#36a447" /><path d="M8.500 11l2 2 3-4" stroke="#fff" strokeWidth="1.500" fill="none" /></TrayIcon>
          <TrayIcon $ml={10} width="14" height="14"><path d="M1 5h2l4-4v12L3 9H1z" fill="#fff" /><path d="M9.500 4.500q2 2.500 0 5" stroke="#fff" fill="none" strokeWidth="1.200" /></TrayIcon>
          <Clock>10:42 AM<br />01-Jul-16</Clock>
        </Tray>
      </Taskbar>
    </Screen>
  </>
);

export default App;
